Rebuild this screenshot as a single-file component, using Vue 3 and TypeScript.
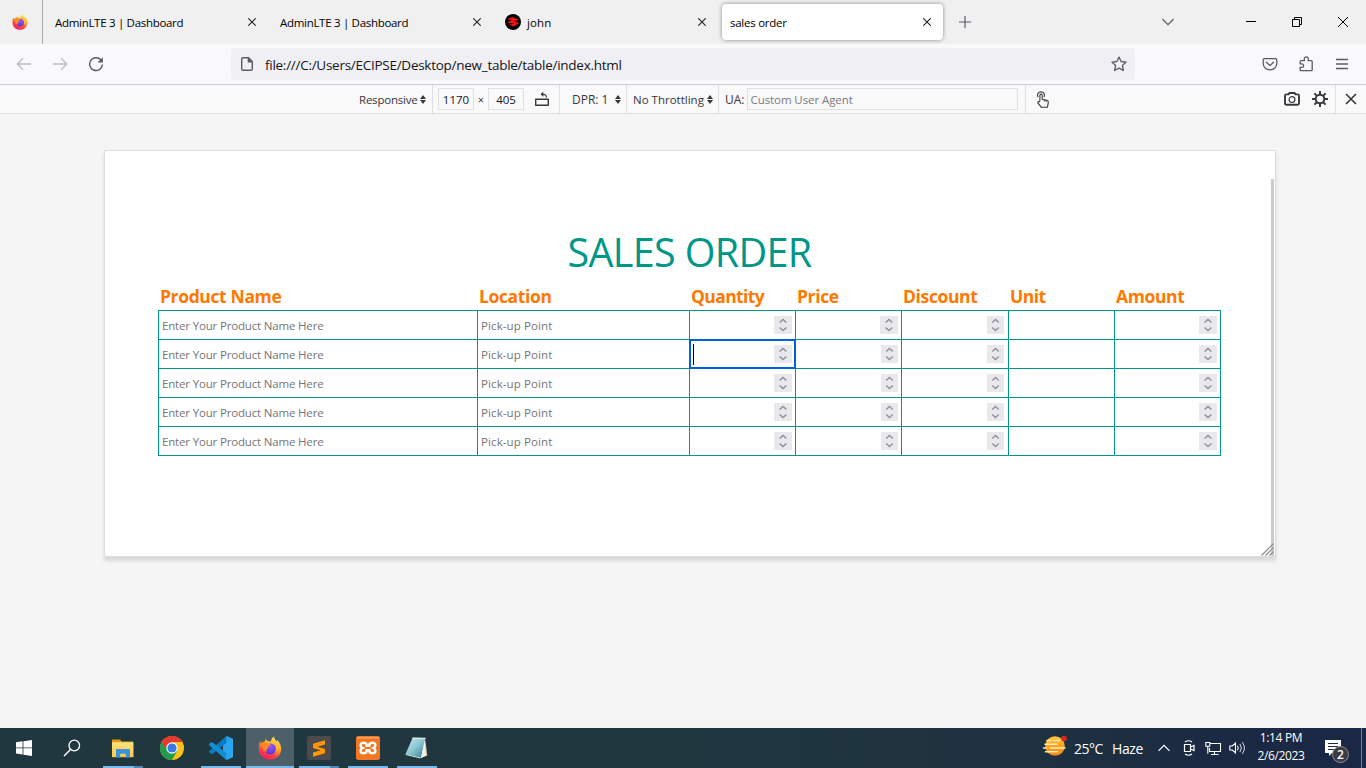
<script setup lang="ts">
interface Tab { title: string; cls: string; active?: boolean; icon?: boolean }

const tabs: Tab[] = [
  { title: 'AdminLTE 3 | Dashboard', cls: 't-long' },
  { title: 'AdminLTE 3 | Dashboard', cls: 't-long' },
  { title: 'john', cls: 't-john', icon: true },
  { title: 'sales order', cls: 't-sales', active: true },
]

const columns = [
  { name: 'Product Name', kind: 'text', hint: 'Enter Your Product Name Here', cls: 'h-product' },
  { name: 'Location', kind: 'text', hint: 'Pick-up Point', cls: 'h-location' },
  { name: 'Quantity', kind: 'number', hint: '', cls: 'h-quantity' },
  { name: 'Price', kind: 'number', hint: '', cls: 'h-price' },
  { name: 'Discount', kind: 'number', hint: '', cls: 'h-discount' },
  { name: 'Unit', kind: 'text', hint: '', cls: 'h-unit' },
  { name: 'Amount', kind: 'number', hint: '', cls: 'h-amount' },
]
const focused = { row: 1, column: 2 }
</script>

<template>
  <div class="screen">
    <svg class="defs" width="0" height="0" aria-hidden="true">
      <defs>
        <linearGradient id="ffBody" x1=".8" y1="0" x2=".3" y2="1">
          <stop offset="0" stop-color="#fff04a" /><stop offset=".4" stop-color="#ffa62b" />
          <stop offset=".7" stop-color="#ff4a3e" /><stop offset="1" stop-color="#f5156c" />
        </linearGradient>
        <radialGradient id="ffGlobe" cx=".55" cy=".3" r=".8">
          <stop offset="0" stop-color="#9059ff" /><stop offset="1" stop-color="#5b2fc4" />
        </radialGradient>
        <symbol id="firefox" viewBox="0 0 24 24">
          <path fill="url(#ffBody)" d="M2.2 5.2 3.4 7.4 4.9 6 7 5.4 7.5 3 9.6 5.1 13 5.4C13 3.5 14.3 1.6 16 .6c.2 2.3 1.5 3.5 3 5l.4-1.7c2.3 2.5 3.8 5.7 3.8 9.1C23.2 19 18.200 23.600 12 23.600S.8 19 .8 13c0-2.800.2-5.500 1.400-7.800z" />
          <circle cx="12.400" cy="13" r="5.500" fill="url(#ffGlobe)" />
          <path fill="#ff8b22" d="M3.500 7.600c2-1.700 4.800-1.500 6.400.2l2.900.6c-.3 1.500-2.300 1.700-2.800 2.600l.3 1.600c-2 .3-2.600 1.700-1.300 3.200-3 .2-5.400-3.500-5.500-8.200z" />
          <path fill="#ffbd35" d="M14.500 5.800c4 2.500 4.800 6.300 2.900 9.700 2.300-.8 3.400-3 3-5.700-.9-2-2.700-3.500-5.900-4z" />
        </symbol>
        <linearGradient id="folder" x1="0" y1="0" x2="0" y2="1">
          <stop offset="0" stop-color="#ffe07c" /><stop offset="1" stop-color="#f8cb4c" />
        </linearGradient>
        <linearGradient id="glass" x1="0" y1="0" x2="1" y2="1">
          <stop offset="0" stop-color="#c9edf2" /><stop offset=".5" stop-color="#8cc6d2" /><stop offset="1" stop-color="#2f7e91" />
        </linearGradient>
        <linearGradient id="sun" x1="0" y1="0" x2="0" y2="1">
          <stop offset="0" stop-color="#ffc62e" /><stop offset="1" stop-color="#f28313" />
        </linearGradient>
      </defs>
    </svg>

    <header class="tabstrip">
      <div class="pinned"><svg width="16" height="16"><use href="#firefox" /></svg></div>
      <div class="tabs">
        <div v-for="(tab, i) in tabs" :key="i" class="tab" :class="{ active: tab.active }">
          <svg v-if="tab.icon" class="favicon" width="16" height="16" viewBox="0 0 16 16">
            <circle cx="8" cy="8" r="8" /><path d="M2.200 4.600 7.500 3.200l6.300 2.200-4.600 2.200 5 1.300-4.800 3.300-5.700-1.300 5.300-1.400L2 8.500l4.600-2.300z" fill="#f5120f" />
          </svg>
          <span class="tab-title" :class="tab.cls">{{ tab.title }}</span>
          <svg class="close" width="8" height="8" viewBox="0 0 8 8"><path d="M.3.3 7.700 7.700M7.700.3.3 7.700" stroke="#222" stroke-width="1.100" /></svg>
        </div>
      </div>
      <svg class="plus" width="12" height="12" viewBox="0 0 12 12"><path d="M0 6h12M6 0v12" stroke="#5b5b66" stroke-width="1.200" /></svg>
      <svg class="alltabs" width="12" height="8" viewBox="0 0 12 8"><path d="m.4 1 5.600 5.600L11.600 1" fill="none" stroke="#5b5b66" stroke-width="1.200" /></svg>
      <div class="window-controls">
        <svg width="10" height="10" viewBox="0 0 10 10"><path d="M0 4.500h10" stroke="#000" /></svg>
        <svg width="10" height="10" viewBox="0 0 10 10"><path d="M.5 2.500h7v7h-7zM2.500 2.500v-2h7v7h-2" fill="none" stroke="#000" /></svg>
        <svg width="10" height="10" viewBox="0 0 10 10"><path d="m0 0 10 10M10 0 0 10" stroke="#000" /></svg>
      </div>
    </header>

    <nav class="navbar">
      <svg class="back" width="16" height="14" viewBox="0 0 16 14"><path d="M15 7H1.500M7 1.300 1.300 7 7 12.700" fill="none" stroke="#bdbdc1" stroke-width="1.300" /></svg>
      <svg class="forward" width="16" height="14" viewBox="0 0 16 14"><path d="M1 7h13.500M9 1.300 14.700 7 9 12.700" fill="none" stroke="#bdbdc1" stroke-width="1.300" /></svg>
      <svg class="reload" width="16" height="16" viewBox="0 0 16 16"><path d="M13.700 5.200A6.400 6.400 0 1 0 14.400 8.500" fill="none" stroke="#5b5b66" stroke-width="1.400" /><path d="M14.900 1.200v5.400H9.500z" fill="#5b5b66" /></svg>
      <div class="urlbar">
        <svg class="page-icon" width="14" height="16" viewBox="0 0 14 16"><path d="M3 1.700h5.500L12.300 5.500V13c0 .8-.5 1.300-1.300 1.300H3c-.8 0-1.300-.5-1.300-1.300V3c0-.8.5-1.300 1.300-1.300z" fill="none" stroke="#5b5b66" stroke-width="1.400" /><path d="M7.700 1.500v5h5z" fill="#5b5b66" /></svg>
        <span class="url">file:///C:/Users/ECIPSE/Desktop/new_table/table/index.html</span>
        <svg class="star" width="16" height="16" viewBox="0 0 16 16"><path d="m8 1 2.100 4.500 5 .6-3.700 3.400 1 5L8 12.100l-4.400 2.400 1-5L.9 6.100l5-.6z" fill="none" stroke="#5b5b66" stroke-width="1.300" stroke-linejoin="round" /></svg>
      </div>
      <div class="nav-actions">
        <svg width="16" height="16" viewBox="0 0 16 16"><path d="M2.500 2.700h11c.8 0 1.300.5 1.300 1.300v3.500a6.800 6.300 0 0 1-13.600 0V4c0-.8.5-1.300 1.300-1.300zM4.500 6.300 8 9.600l3.500-3.300" fill="none" stroke="#5b5b66" stroke-width="1.300" stroke-linecap="round" /></svg>
        <svg width="16" height="16" viewBox="-1 0 16 16"><path d="M2 14.700c-.6 0-.8-.3-.8-.8v-2.500h1.700a1.700 1.700 0 0 0 0-3.500H1.200V5.500c0-.6.3-.9.9-.9h3.200V2.900a2 2 0 0 1 4 0v1.700h2.900c.7 0 1 .3 1 1v8.200c0 .6-.3.900-1 .9z" fill="none" stroke="#5b5b66" stroke-width="1.300" /></svg>
        <svg width="16" height="16" viewBox="0 0 16 16"><path d="M2 3.500h12M2 8h12M2 12.500h12" stroke="#5b5b66" stroke-width="1.300" /></svg>
      </div>
    </nav>

    <div class="device-bar">
      <div class="cell device"><span class="d-resp">Responsive</span><i class="updown" /></div>
      <div class="cell size">
        <span class="field w"><b class="d-num">1170</b></span><span class="times">×</span><span class="field h"><b class="d-num">405</b></span>
        <svg class="rotate" width="16" height="16" viewBox="0 0 16 16"><path d="M1.700 8.200h12.600v6.100H1.700z" fill="none" stroke="#38383d" stroke-width="1.400" stroke-linejoin="round" /><path d="M12.500 6.500c0-2.200-1-3.200-3.700-3.200H7.500" fill="none" stroke="#38383d" stroke-width="1.200" /><path d="M9.300.700 6.500 3.300l2.800 2.500z" fill="#38383d" /></svg>
      </div>
      <div class="cell dpr"><span class="d-dpr">DPR: 1</span><i class="updown" /></div>
      <div class="cell throttle"><span class="d-thr">No Throttling</span><i class="updown" /></div>
      <div class="cell agent"><span class="d-ua">UA:</span><span class="field ua"><b class="d-agent">Custom User Agent</b></span></div>
      <svg class="touch" width="14" height="17" viewBox="0 0 14 17"><path d="M3.900 10.200V4.300c0-1.600 2.300-1.600 2.300 0v4l4.700.9c1.200.3 1.600 1 1.400 2.100l-.8 4.900H5.200L2 12.200c-.9-1.300.7-2.300 1.900-1M8.200 8.700v1.800M10.300 9.200v1.500" fill="none" stroke="#38383d" stroke-width="1.100" stroke-linejoin="round" /><path d="M2.100 6.100C.4 3.200 2.500.900 5 .900s4.600 2.300 2.900 5.200" fill="none" stroke="#38383d" stroke-width="1.100" /></svg>
      <div class="device-tools">
        <svg class="camera" width="16" height="14" viewBox="0 0 16 14"><path d="M2.500 2.400h2L5.500 1h5l1 1.400h2c1 0 1.500.5 1.500 1.500v7.300c0 1-.5 1.500-1.500 1.500h-11c-1 0-1.500-.5-1.500-1.500V3.900c0-1 .5-1.500 1.500-1.500z" fill="none" stroke="#38383d" stroke-width="1.900" /><circle cx="8" cy="7.600" r="2.900" fill="none" stroke="#38383d" stroke-width="1.200" /></svg>
        <svg class="gear" width="16" height="16" viewBox="0 0 16 16"><path d="M8 0v16M0 8h16M2.400 2.400l11.200 11.200M13.600 2.400 2.400 13.600" stroke="#38383d" stroke-width="2" /><circle cx="8" cy="8" r="4.300" fill="#f9f9fa" stroke="#38383d" stroke-width="2" /></svg>
      </div>
      <div class="device-close"><svg width="12" height="12" viewBox="0 0 12 12"><path d="m1 1 10 10M11 1 1 11" stroke="#38383d" stroke-width="1.600" /></svg></div>
    </div>

    <main class="stage">
      <section class="viewport">
        <h1><span>SALES ORDER</span></h1>
        <div class="grid head">
          <div v-for="c in columns" :key="c.name"><span :class="c.cls">{{ c.name }}</span></div>
        </div>
        <div class="sheet">
          <div v-for="(n, r) in 5" :key="n" class="grid line">
            <div v-for="(c, k) in columns" :key="c.name" class="box" :class="{ focus: r === focused.row && k === focused.column }">
              <span v-if="c.hint" :class="k === 0 ? 'hint-a' : 'hint-b'">{{ c.hint }}</span>
              <i v-if="r === focused.row && k === focused.column" class="caret" />
              <svg v-if="c.kind === 'number'" class="spinner" :class="{ slim: k === 4 || (k === 3 && r > 0), inset: k === 4 }" width="18" height="18" viewBox="0 0 18 18" preserveAspectRatio="none">
                <rect width="18" height="18" fill="#e9e9ed" />
                <path d="m5.600 6.500 3.400-3 3.400 3M5.600 11.500l3.400 3 3.400-3" fill="none" stroke="#8f8f9d" stroke-width="1.500" />
              </svg>
            </div>
          </div>
        </div>
        <i class="scrollbar" />
        <svg class="grip" width="14" height="14" viewBox="0 0 14 14"><path d="M1.500 13.500 13.500 1.500M5.500 13.500l8-8M9.500 13.500l4-4" stroke="#8a8a8a" stroke-width="1.200" /></svg>
      </section>
    </main>

    <footer class="taskbar">
      <div class="sys"><svg width="16" height="16" viewBox="0 0 16 16"><path fill="#fff" d="M0 2.200 6.600 1.300v6.200H0zM7.400 1.200 16 0v7.500H7.400zM0 8.300h6.600v6.200L0 13.600zM7.400 8.300H16V16l-8.600-1.300z" /></svg></div>
      <div class="sys"><svg width="18" height="18" viewBox="0 0 18 18"><circle cx="11.300" cy="6.500" r="5.300" fill="none" stroke="#fff" stroke-width="1.300" /><path d="M7.500 10.500 1 17" stroke="#fff" stroke-width="1.400" /></svg></div>
      <div class="apps">
        <div class="app running multi"><svg width="24" height="24" viewBox="0 0 24 24"><path d="M1 3.500h8l1.500 2H22V9H1z" fill="#dc9f16" /><path d="M1 6.200h21.500v15H1z" fill="url(#folder)" /><path d="M5 21.500v-7.300c0-.8.500-1.200 1.200-1.200h11.600c.7 0 1.200.400 1.200 1.200v7.300h-4.200v-3.700H9.200v3.700z" fill="#3b94db" /></svg></div>
        <div class="app"><svg width="24" height="24" viewBox="0 0 24 24"><circle cx="12" cy="12" r="12" fill="#fbc116" /><path d="M1.600 6A12 12 0 0 1 22.400 6H12z" fill="#e33b2e" /><path d="M1.600 6A12 12 0 0 0 12 24l5.200-9L12 12z" fill="#229b4d" /><path d="M1.600 6 6.800 15 12 12V6z" fill="#229b4d" /><path d="M1.600 6 5 11.800 12 6h10.400A12 12 0 0 0 1.600 6z" fill="#e33b2e" /><circle cx="12" cy="12" r="5.700" fill="#fff" /><circle cx="12" cy="12" r="4.600" fill="#3979e6" /></svg></div>
        <div class="app running"><svg width="24" height="24" viewBox="0 0 24 24"><path d="M17.500 0 24 2.800v18.400L17.500 24 14 20.500V3.500z" fill="#2aa5ee" /><path d="M17.500 0v6.800L3.300 18 1.700 17.700.1 16 0 15.300z" fill="#087bc2" /><path d="M.1 8.100 2 6.300h1.300L17.500 17v7L.1 9.200z" fill="#138ed5" /></svg></div>
        <div class="app running current"><svg width="24" height="24"><use href="#firefox" /></svg></div>
        <div class="app running multi"><svg width="24" height="24" viewBox="0 0 24 24"><rect width="24" height="24" rx="2" fill="#4b4b4b" /><path d="m6 7.700 12-3.500v4.200l-7.700 2.300 7.700 2.200v4.300L6 20.700v-4.200l7.700-2.300L6 11.900z" fill="#ff9800" /></svg></div>
        <div class="app running"><svg width="24" height="24" viewBox="0 0 24 24"><rect width="24" height="24" rx="2.500" fill="#f37623" /><path d="M1 1h22v1.500H1z" fill="#f9a36c" /><path d="M10.700 9.700v-.5C10.700 7.400 9.500 6.700 7.700 6.700c-2 0-3.100 1-3.100 2.600 0 1.300.8 2.200 2 2.700-1.200.5-2 1.400-2 2.700 0 1.600 1.100 2.600 3.100 2.600 1.800 0 3-.7 3-2.500v-.5h2.600v.5c0 1.800 1.200 2.500 3 2.500 2 0 3.100-1 3.100-2.600 0-1.300-.8-2.200-2-2.700 1.200-.5 2-1.400 2-2.700 0-1.600-1.100-2.600-3.100-2.600-1.800 0-3 .7-3 2.500v.5z" fill="none" stroke="#fff" stroke-width="2.400" /></svg></div>
        <div class="app running"><svg width="24" height="24" viewBox="0 0 24 24"><path d="m20 2 2.300 17.500-6.500 2.500z" fill="#d9cba8" /><path d="m19.500 2 1.600 17.500-5.300 2.500z" fill="#f1f0ea" /><path d="M7.700 1.800 20 2l-4.300 19.500L.6 18z" fill="url(#glass)" /><path d="m.6 18 15.100 3.500-.2 1L.7 19z" fill="#dce9e8" /><path d="m7.700 1.500 13 .2-.2 1.500-13.400-.2z" fill="#d8e4e2" /></svg></div>
      </div>
      <div class="tray">
        <svg class="weather" width="26" height="22" viewBox="0 0 26 22"><circle cx="13" cy="11" r="9.800" fill="url(#sun)" /><path d="M5 5.500h4m2 0h7M3 9.300h12M8 13.100h15M1.500 13.100h3M3.500 16.800h12" stroke="#ffeab8" stroke-width="1.500" stroke-linecap="round" /><circle cx="22" cy="3.600" r="2.800" fill="#dc2626" /></svg>
        <span class="temp">25°C</span><span class="haze">Haze</span>
        <svg class="up" width="12" height="8" viewBox="0 0 12 8"><path d="M.5 6.800 6 1.300l5.500 5.500" fill="none" stroke="#fff" stroke-width="1.200" /></svg>
        <svg class="meet" width="12" height="16" viewBox="0 0 12 16"><path d="M1.500 4.500h6v7h-6zM7.500 7l3.500-1.500v5L7.500 9M2 2Q5.500-.5 9 2M2 14q3.500 2.500 7 0" fill="none" stroke="#fff" stroke-width="1.200" /></svg>
        <svg class="net" width="17" height="15" viewBox="0 0 17 15"><path d="M5 2.500h10.500v8H4.500V7M9.500 10.500v3M6 13.500h7.500M.8 1.500h4v3.800h-4zM2.800 5.300v7.500" fill="none" stroke="#fff" stroke-width="1.100" /></svg>
        <svg class="vol" width="17" height="14" viewBox="0 0 17 14"><path d="M.8 5v4h2.500l3.200 3V2L3.300 5zM8.500 4.700q1.500 2.300 0 4.600" fill="none" stroke="#fff" stroke-width="1.100" /><path d="M10.900 3q3 4 0 8M13.200 1.200q4.500 5.800 0 11.600" fill="none" stroke="#d8dce2" /></svg>
        <div class="clock"><span class="time">1:14 PM</span><span class="date">2/6/2023</span></div>
        <div class="notes">
          <svg width="16" height="16" viewBox="0 0 16 16"><path d="M0 0h16v13H7l-3 3v-3H0z" fill="#fff" /><path d="M3 3.500h10M3 6.500h10M3 9.500h6" stroke="#1b2a42" /></svg>
          <span class="badge">2</span>
        </div>
        <i class="desktop-edge" />
      </div>
    </footer>
  </div>
</template>

<style>
html, body { margin: 0; overflow: hidden; }
</style>

<style scoped>
* { box-sizing: border-box; }
.screen { width: 1366px; height: 768px; display: flex; flex-direction: column; font-family: "Open Sans", "Noto Sans", sans-serif; font-size: 12px; color: #15141a; white-space: nowrap; overflow: hidden; }
svg { display: block; flex: none; }
.defs { position: absolute; }

.tabstrip { height: 44px; flex: none; background: #f0f0f0; display: flex; align-items: center; }
.pinned { width: 43px; height: 44px; border-right: 1px solid #aaa; padding: 14px 0 0 12px; }
.tabs { display: flex; padding-left: 2px; }
.tab { width: 221px; height: 36px; margin: 0 2px; padding: 0 12px 0 8px; display: flex; align-items: center; border-radius: 4px; }
.tab.active { background: #fff; box-shadow: 0 0 4px rgba(0, 0, 0, .42); }
.favicon { margin-right: 6px; }
.tab-title { flex: 1; line-height: 16px; padding-top: 1px; color: #000; font-size: 11.5px; }
.t-long { letter-spacing: -.3px; }
.t-john { letter-spacing: .1px; }
.t-sales { letter-spacing: -.25px; }
.plus { margin-left: 14px; }
.alltabs { margin-left: 191px; }
.window-controls { display: flex; gap: 36px; margin-left: 72px; }

.navbar { height: 41px; flex: none; background: #f9f9fb; border-bottom: 1px solid #ccccd0; display: flex; align-items: center; padding-left: 16px; }
.forward { margin-left: 20px; }
.reload { margin-left: 20px; }
.urlbar { width: 904px; height: 32px; margin-left: 127px; border-radius: 4px; background: #f0f0f4; display: flex; align-items: center; padding: 0 8px 0 9px; }
.url { flex: 1; margin-left: 11px; font-size: 13.500px; line-height: 20px; letter-spacing: -.27px; padding-top: 1px; }
.nav-actions { display: flex; gap: 20px; margin-left: 127px; }

.device-bar { height: 29px; flex: none; background: #f9f9fa; border-bottom: 1px solid #e0e0e2; display: flex; align-items: center; color: #38383d; padding-left: 359px; }
.cell { height: 28px; display: flex; align-items: center; border-right: 1px solid #e0e0e2; }
.cell.device { width: 74px; }
.cell.size { width: 127px; padding-left: 5px; }
.cell.dpr { width: 67px; padding-left: 12px; justify-content: space-between; padding-right: 5px; }
.cell.throttle { width: 92px; padding-left: 6px; }
.cell.agent { width: 307px; padding-left: 6px; }
.field { height: 22px; border: 1px solid #e0e0e2; display: flex; align-items: center; justify-content: center; color: #15141a; }
.field b { font-weight: 400; }
.field.w, .field.h { width: 36px; }
.field.ua { width: 271px; margin-left: 2px; padding-left: 3px; justify-content: flex-start; color: #7a7a80; }
.d-num { font-size: 11.5px; }
.times { width: 14px; text-align: center; font-size: 11px; }
.rotate { margin-left: 10px; }
.updown { position: relative; width: 6px; height: 9px; margin-left: 3px; }
.updown::before, .updown::after { content: ""; position: absolute; left: 0; border: 3px solid transparent; }
.updown::before { top: -3px; border-bottom: 4px solid #38383d; }
.updown::after { bottom: -3px; border-top: 4px solid #38383d; }
.d-resp { font-size: 11.5px; letter-spacing: -.22px; }
.d-thr { font-size: 11.5px; }
.d-agent { font-size: 11.5px; letter-spacing: -.08px; }
.touch { margin-left: 10px; }
.device-tools { display: flex; align-items: center; gap: 12px; margin-left: auto; padding-right: 7px; }
.device-close { height: 28px; width: 31px; border-left: 1px solid #e0e0e2; display: flex; align-items: center; padding-left: 9px; }

.stage { flex: 1; background: #f5f5f5; padding: 36px 0 0 104px; }
.viewport { position: relative; width: 1172px; height: 407px; background: #fff; border: 1px solid #ddd; box-shadow: 0 4px 4px rgba(0, 0, 0, .12); padding: 71px 0 0 53px; }
h1 { margin: 0; width: 1063px; height: 60px; line-height: 60px; font-size: 39.500px; font-weight: 400; text-align: center; color: #009688; }
h1 span { letter-spacing: -.65px; }
.grid { display: grid; grid-template-columns: 319px 212px 106px 106px 107px 106px 106px; }
.head { height: 28px; line-height: 28px; font-size: 17.5px; font-weight: 700; color: #ff7800; padding-left: 2px; }
.head span { letter-spacing: -.37px; }
.head .h-quantity { letter-spacing: -.6px; }
.head .h-unit { letter-spacing: -.55px; }
.sheet { width: 1063px; border: solid #009688; border-width: 1px 0 0 1px; }
.box { position: relative; height: 29px; border: solid #009688; border-width: 0 1px 1px 0; display: flex; align-items: center; padding-left: 3px; color: #757575; }
.spinner { margin-left: auto; margin-right: 3px; }
.spinner.slim { width: 17px; }
.spinner.inset { margin-right: 4px; }
.box.focus::after { content: ""; position: absolute; inset: -1px -1px -1px -1px; border: 2px solid #0060df; border-radius: 1px; }
.caret { width: 1px; height: 21px; background: #000; }
.hint-a, .hint-b { font-size: 11.5px; padding-top: 1px; }
.hint-a { letter-spacing: -.17px; }
.hint-b { letter-spacing: .1px; }
.scrollbar { position: absolute; right: 1px; top: 28px; width: 3px; height: 377px; background: #cbcbcb; }
.grip { position: absolute; right: 1px; bottom: 0; }

.taskbar { height: 40px; flex: none; display: flex; background: linear-gradient(90deg, #21373f, #20373f 45%, #1e323f 75%, #1b2a42 88%, #1a2746); color: #fff; }
.sys { width: 48px; display: flex; align-items: center; justify-content: center; }
.apps { display: flex; gap: 1px; padding-left: 3px; }
.app { position: relative; width: 48px; display: flex; align-items: center; justify-content: center; }
.running::after { content: ""; position: absolute; left: 4px; right: 4px; bottom: 0; height: 2px; background: #76b9ed; }
.multi::after { background: linear-gradient(90deg, #76b9ed 31px, #5288ad 31px); }
.current { background: #4e6067; }
.current::after { left: 0; right: 0; }
.tray { flex: 1; display: flex; align-items: center; justify-content: flex-end; }
.weather { margin-top: -4px; }
.temp, .haze { font-size: 14px; line-height: 20px; padding-top: 2px; }
.temp { width: 38px; margin-left: 6px; letter-spacing: -.5px; }
.haze { width: 46px; letter-spacing: -.4px; }
.meet { margin-left: 13px; }
.net { margin-left: 10px; }
.vol { margin-left: 7px; }
.clock { width: 60px; margin-left: 5px; display: flex; flex-direction: column; align-items: center; line-height: 18px; }
.time { letter-spacing: -.35px; margin-top: -2px; }
.date { letter-spacing: -.4px; }
.notes { position: relative; margin-left: 14px; width: 36px; }
.badge { position: absolute; left: 7px; top: 6px; width: 17px; height: 17px; border-radius: 50%; background: #393c42; border: 1px solid #8b8f98; font-size: 12px; font-weight: 600; line-height: 15px; text-align: center; }
.desktop-edge { width: 5px; height: 40px; border-left: 1px solid #747e8c; }
</style>
